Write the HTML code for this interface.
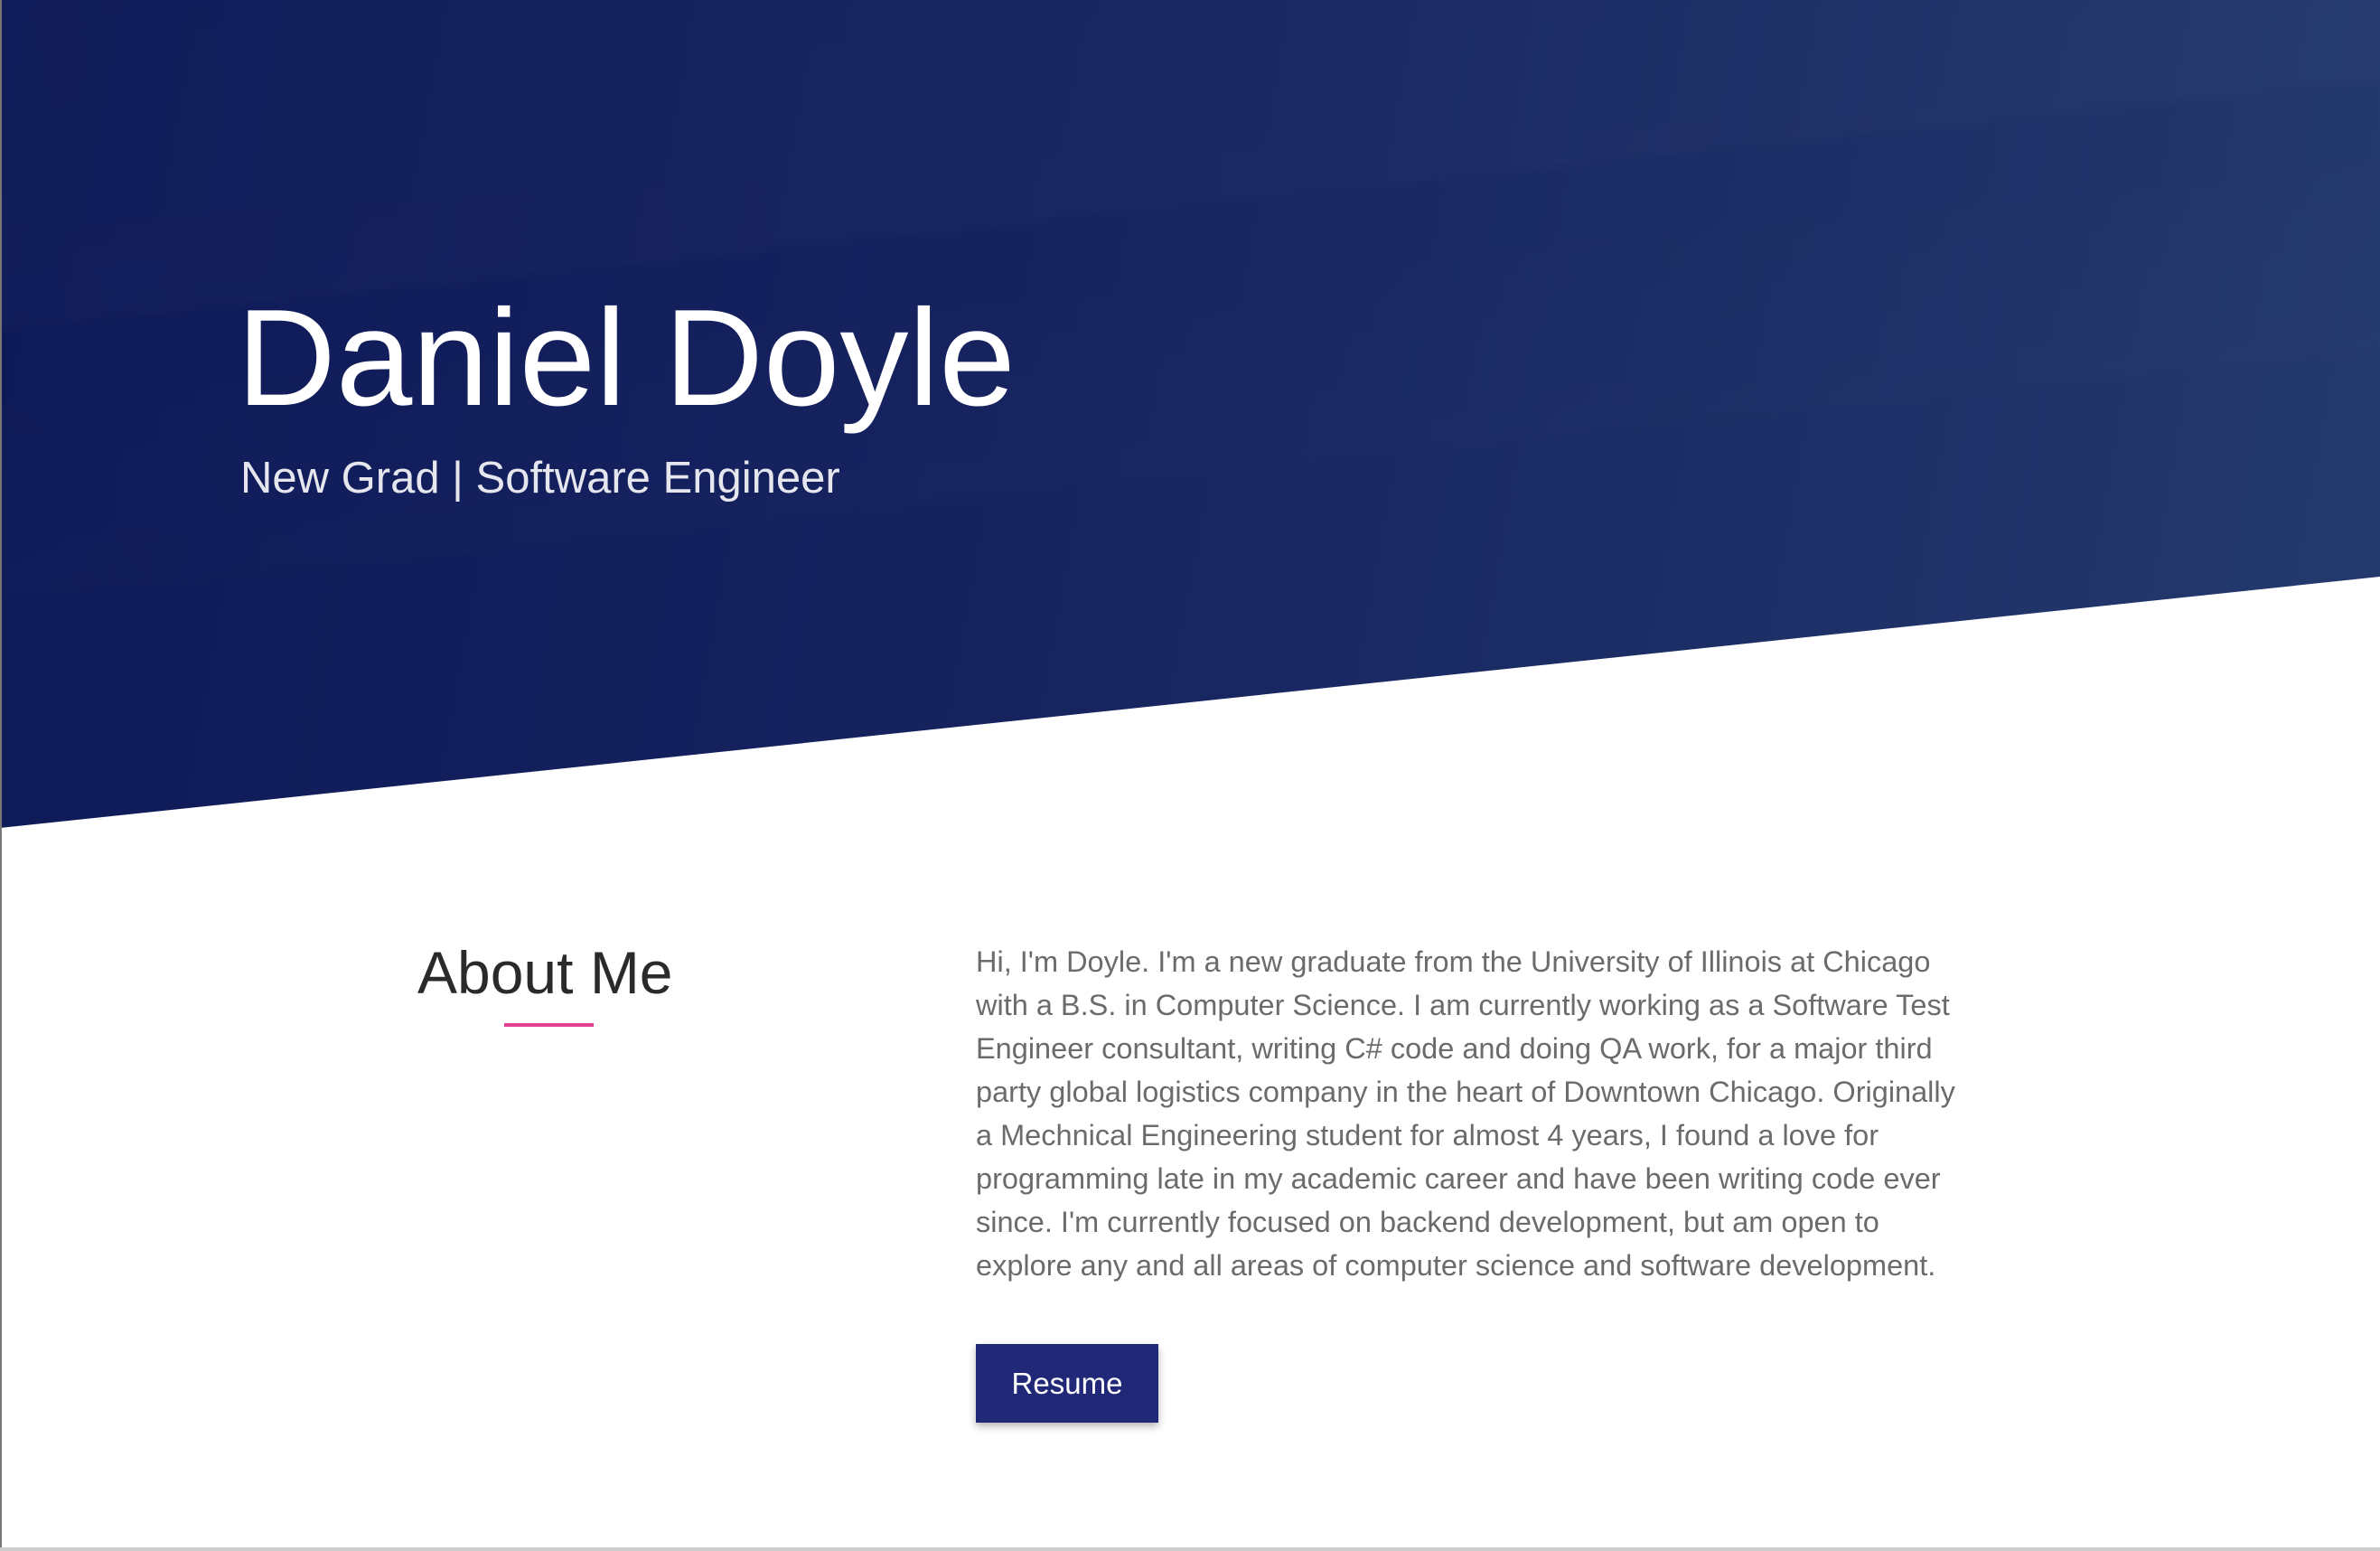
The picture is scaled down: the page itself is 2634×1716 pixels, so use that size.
<!DOCTYPE html>
<html><head><meta charset="utf-8"><style>
html,body{margin:0;padding:0}
body{width:2634px;height:1716px;position:relative;overflow:hidden;background:#fff;font-family:"Liberation Sans",sans-serif;}
.hero{position:absolute;left:0;top:0;width:2634px;height:920px;background:linear-gradient(100deg,#0e1a58 0%,#16235f 45%,#243a6e 100%);clip-path:polygon(0 0,2634px 0,2634px 638px,0 916px);}
.sheen{position:absolute;left:0;top:0;width:2634px;height:920px;clip-path:polygon(0 0,2634px 0,2634px 638px,0 916px);background:linear-gradient(174deg,rgba(255,255,255,0.01) 0%,rgba(255,255,255,0.015) 30%,rgba(255,255,255,0) 31%,rgba(255,255,255,0.008) 55%,rgba(255,255,255,0) 56%);}
h1{position:absolute;left:262px;top:320px;margin:0;font-weight:300;font-size:152px;color:#fff;line-height:1;letter-spacing:0px;white-space:nowrap}
.sub{position:absolute;left:266px;top:505px;font-size:49px;color:#e6e6ee;white-space:nowrap;line-height:1}
h2{position:absolute;left:462px;top:1043px;margin:0;font-weight:400;font-size:66px;color:#2a2a2a;line-height:1;white-space:nowrap}
.ul{position:absolute;left:558px;top:1132px;width:99px;height:4px;background:#e0408f}
.p{position:absolute;left:1080px;top:1040px;font-size:32.5px;line-height:48px;color:#6b6b6b;white-space:nowrap}
.btn{position:absolute;left:1080px;top:1487px;width:202px;height:87px;background:#212877;color:#fff;font-size:33px;line-height:87px;text-align:center;box-shadow:0 4px 8px rgba(0,0,0,0.3)}
.lb{position:absolute;left:0;top:0;width:2px;height:1716px;background:#777}
.bb{position:absolute;left:0;top:1712px;width:2634px;height:4px;background:#ccc}
</style></head><body>
<div class="hero"></div><div class="sheen"></div>
<h1>Daniel Doyle</h1>
<div class="sub">New Grad | Software Engineer</div>
<h2>About Me</h2>
<div class="ul"></div>
<div class="p">Hi, I'm Doyle. I'm a new graduate from the University of Illinois at Chicago<br>with a B.S. in Computer Science. I am currently working as a Software Test<br>Engineer consultant, writing C# code and doing QA work, for a major third<br>party global logistics company in the heart of Downtown Chicago. Originally<br>a Mechnical Engineering student for almost 4 years, I found a love for<br>programming late in my academic career and have been writing code ever<br>since. I'm currently focused on backend development, but am open to<br>explore any and all areas of computer science and software development.</div>
<div class="btn">Resume</div>
<div class="lb"></div><div class="bb"></div>
</body></html>
